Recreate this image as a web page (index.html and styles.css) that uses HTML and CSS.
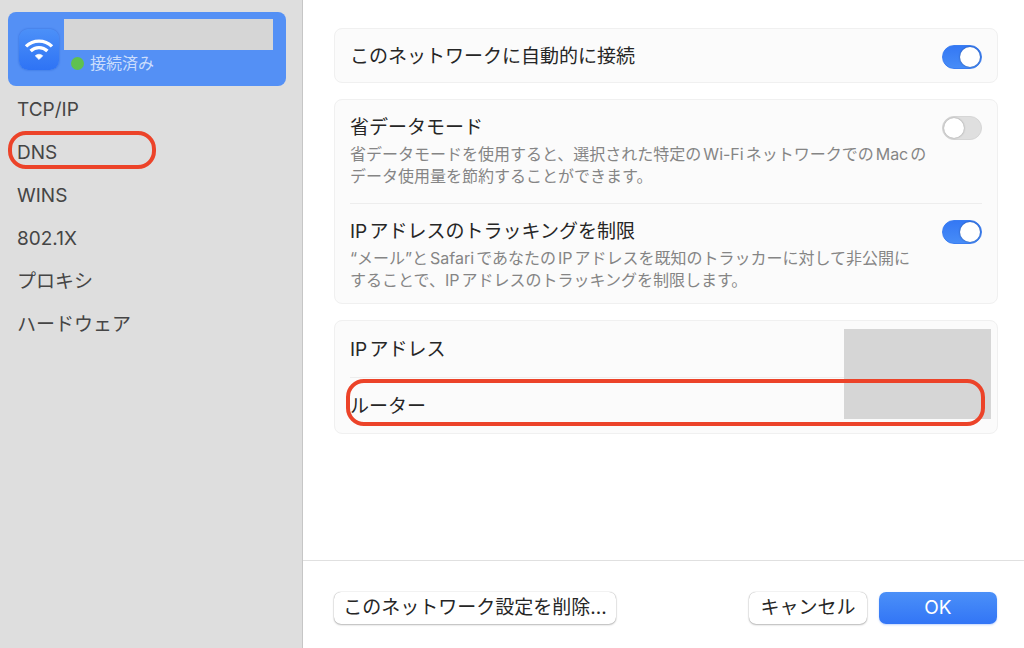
FILE: index.html
```html
<!DOCTYPE html>
<html lang="ja">
<head>
<meta charset="utf-8">
<meta name="viewport" content="width=device-width, initial-scale=1">
<title>Wi-Fi</title>
<link rel="stylesheet" href="styles.css">
</head>
<body>
<div class="window">
  <aside class="sidebar">
    <a class="network" href="#wifi" aria-label="Wi-Fi">
      <svg class="network-icon" viewBox="0 0 40 41" aria-hidden="true">
        <defs>
          <linearGradient id="tile" x1="0" y1="0" x2="0" y2="1">
            <stop offset="0" stop-color="#4c90f8"/>
            <stop offset="1" stop-color="#2e73f5"/>
          </linearGradient>
        </defs>
        <rect width="40" height="41" rx="9" fill="url(#tile)"/>
        <g fill="none" stroke="#fff" stroke-width="3.4">
          <path d="M7 17.4a18.7 18.7 0 0 1 26 0"/>
          <path d="M11.6 22a12.2 12.2 0 0 1 16.8 0"/>
        </g>
        <path d="M20 30.6l-3.8-3.8a5.4 5.4 0 0 1 7.6 0z" fill="#fff" stroke="#fff" stroke-width=".6"/>
      </svg>
      <span class="network-info">
        <span class="network-name"></span>
        <span class="network-status">接続済み</span>
      </span>
    </a>
    <nav class="menu">
      <a href="#tcpip">TCP/IP</a>
      <a class="marked" href="#dns">DNS</a>
      <a href="#wins">WINS</a>
      <a href="#8021x">802.1X</a>
      <a href="#proxy">プロキシ</a>
      <a href="#hardware">ハードウェア</a>
    </nav>
  </aside>
  <div class="pane">
    <main class="content">
      <section class="card">
        <div class="row single">
          <label class="title" for="auto">このネットワークに自動的に接続</label>
          <input class="switch" type="checkbox" role="switch" id="auto" checked>
        </div>
      </section>
      <section class="card">
        <div class="row">
          <div class="text">
            <label class="title" for="low-data">省データモード</label>
            <p class="note">省データモードを使用すると、選択された特定のWi-FiネットワークでのMacの<br>データ使用量を節約することができます。</p>
          </div>
          <input class="switch" type="checkbox" role="switch" id="low-data">
        </div>
        <div class="row">
          <div class="text">
            <label class="title" for="tracking">IPアドレスのトラッキングを制限</label>
            <p class="note">“メール”とSafariであなたのIPアドレスを既知のトラッカーに対して非公開に<br>することで、IPアドレスのトラッキングを制限します。</p>
          </div>
          <input class="switch" type="checkbox" role="switch" id="tracking" checked>
        </div>
      </section>
      <section class="card addresses">
        <div class="row single"><span class="title">IPアドレス</span></div>
        <div class="row single"><span class="title">ルーター</span></div>
        <div class="redacted"></div>
        <div class="router-mark"></div>
      </section>
    </main>
    <footer class="footer">
      <button class="button forget" type="button">このネットワーク設定を削除...</button>
      <button class="button" type="button">キャンセル</button>
      <button class="button primary" type="button">OK</button>
    </footer>
  </div>
</div>
</body>
</html>
```

FILE: styles.css
```css
*,
*::before,
*::after {
  box-sizing: border-box;
}

body {
  margin: 0;
  background: #fff;
  color: #262626;
  font-family: Inter, "Noto Sans CJK JP", sans-serif;
  font-size: 19px;
  line-height: 24px;
  text-autospace: normal;
}

a {
  color: inherit;
  text-decoration: none;
}

.window {
  display: flex;
  min-height: 100vh;
}

.sidebar {
  flex: 0 0 303px;
  padding: 12px 16px 12px 8px;
  background: #dedede;
  border-right: 1px solid #c6c6c6;
}

.network {
  display: flex;
  align-items: flex-start;
  gap: 5px;
  height: 74px;
  padding: 7px 13px 0 11px;
  border-radius: 8px;
  background: #5490f5;
}

.network-icon {
  flex: none;
  width: 40px;
  height: 41px;
  margin-top: 10px;
  border-radius: 9px;
  box-shadow: 0 0 2px #2b66d6;
}

.network-info {
  display: flex;
  flex: 1;
  flex-direction: column;
}

.network-name {
  height: 31px;
  background: #d6d6d6;
}

.network-status {
  display: flex;
  align-items: center;
  gap: 6px;
  padding: 1px 0 0 7px;
  color: #cbddfc;
  font-size: 16px;
}

.network-status::before {
  content: "";
  width: 13px;
  height: 13px;
  border-radius: 50%;
  background: #5fc14f;
}

.menu {
  display: flex;
  flex-direction: column;
  padding-top: 2px;
  color: #454545;
}

.menu a {
  padding: 0 9px;
  line-height: 43px;
}

.marked {
  position: relative;
}

.marked::after {
  content: "";
  position: absolute;
  top: 0;
  left: 0;
  width: 148px;
  height: 38px;
  border: 4px solid #ec4329;
  border-radius: 18px;
}

.pane {
  display: flex;
  flex: 1;
  flex-direction: column;
  min-width: 0;
}

.content {
  display: flex;
  flex: 1;
  flex-direction: column;
  gap: 16px;
  padding: 28px 26px 28px 31px;
}

.card {
  padding: 0 15px;
  border: 1px solid #f0f0f0;
  border-radius: 8px;
  background: #fbfbfb;
}

.row {
  display: flex;
  align-items: flex-start;
  justify-content: space-between;
  gap: 8px;
  padding: 16px 0;
}

.row + .row {
  padding: 16px 0 12px;
  border-top: 1px solid #ededed;
}

.row.single {
  align-items: center;
  min-height: 53px;
  padding: 15px 0 13px;
}

.title {
  display: block;
}

.note {
  margin: 3px 0 0;
  color: #858585;
  font-size: 16px;
  line-height: 22px;
}

.switch {
  flex: none;
  display: flex;
  align-items: center;
  width: 40px;
  height: 24px;
  margin: 0;
  padding: 0 1px;
  appearance: none;
  border: 1px solid #d6d6d6;
  border-radius: 12px;
  background: #dfdfdf;
}

.switch::before {
  content: "";
  width: 20px;
  height: 20px;
  border-radius: 50%;
  background: #fff;
  box-shadow: 0 0 2px #00000066;
}

.switch:checked {
  justify-content: flex-end;
  border-color: #3b7ef2;
  background: linear-gradient(#3478f4, #478cf7);
}

.addresses {
  position: relative;
}

.addresses .row {
  min-height: 56px;
}

.redacted {
  position: absolute;
  top: 8px;
  right: 6px;
  width: 147px;
  height: 90px;
  background: #d6d6d6;
}

.router-mark {
  position: absolute;
  right: 12px;
  bottom: 7px;
  left: 11px;
  height: 47px;
  border: 4px solid #ec4329;
  border-radius: 18px;
}

.footer {
  display: flex;
  gap: 12px;
  padding: 31px 27px 24px 31px;
  border-top: 1px solid #e0e0e0;
}

.button {
  min-width: 118px;
  height: 32px;
  padding: 0 8px;
  border: 0;
  border-radius: 7px;
  background: #fff;
  box-shadow: 0 0 1px #00000066, 0 1px 2px #00000040;
  color: #262626;
  font: inherit;
  line-height: 32px;
}

.forget {
  min-width: 282px;
  margin-right: auto;
}

.primary {
  background: linear-gradient(#4b90f8, #3275f6);
  box-shadow: 0 1px 2px #3275f64d;
  color: #fff;
}
```
